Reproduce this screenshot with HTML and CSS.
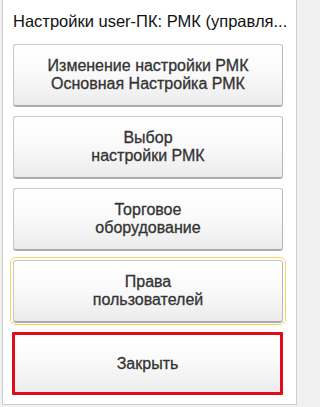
FILE: index.html
```html
<!DOCTYPE html>
<html lang="ru">
<head>
<meta charset="utf-8">
<title>Настройки</title>
<link rel="stylesheet" href="styles.css">
</head>
<body>
<div class="window">
  <div class="title">Настройки user-ПК: РМК (управля...</div>
  <div class="buttons">
    <button class="btn">Изменение настройки РМК<br>Основная Настройка РМК</button>
    <button class="btn">Выбор<br>настройки РМК</button>
    <button class="btn">Торговое<br>оборудование</button>
    <button class="btn focused">Права<br>пользователей</button>
    <button class="btn close">Закрыть</button>
  </div>
</div>
</body>
</html>
```
FILE: styles.css
```css
html, body {
  margin: 0;
  padding: 0;
  background: #f0f0f0;
  font-family: "Liberation Sans", Arial, sans-serif;
}
.window {
  box-sizing: border-box;
  width: 295px;
  height: 405px;
  margin-left: 2px;
  background: #fff;
  border: 1px solid #cdcdcd;
  border-top: none;
  padding: 0 13px 0 10px;
}
.title {
  height: 44px;
  box-sizing: border-box;
  padding: 12px 0 0 0;
  font-size: 16.5px;
  line-height: 19px;
  color: #111;
  white-space: nowrap;
}
.buttons {
  display: flex;
  flex-direction: column;
  gap: 10px;
}
.btn {
  box-sizing: border-box;
  height: 62px;
  width: 270px;
  margin: 0;
  padding: 0;
  border: 1px solid #c8c8c8;
  border-bottom-color: #a8a8a8;
  border-right-color: #b8b8b8;
  border-radius: 3px;
  box-shadow: 0 1px 0 #b0b0b0;
  background: linear-gradient(to bottom, #ffffff 0%, #f9f9f9 50%, #ececec 100%);
  font-family: "Liberation Sans", Arial, sans-serif;
  font-size: 16px;
  line-height: 18px;
  color: #333;
  -webkit-text-stroke: 0.3px #333;
  text-align: center;
}
.focused {
  outline: 1px solid #fcd35b;
  outline-offset: 2px;
}
.close {
  height: 63px;
  width: 271px;
  margin-left: -1px;
  border: 3px solid #e30b17;
  border-radius: 1px;
  box-shadow: none;
}
```
